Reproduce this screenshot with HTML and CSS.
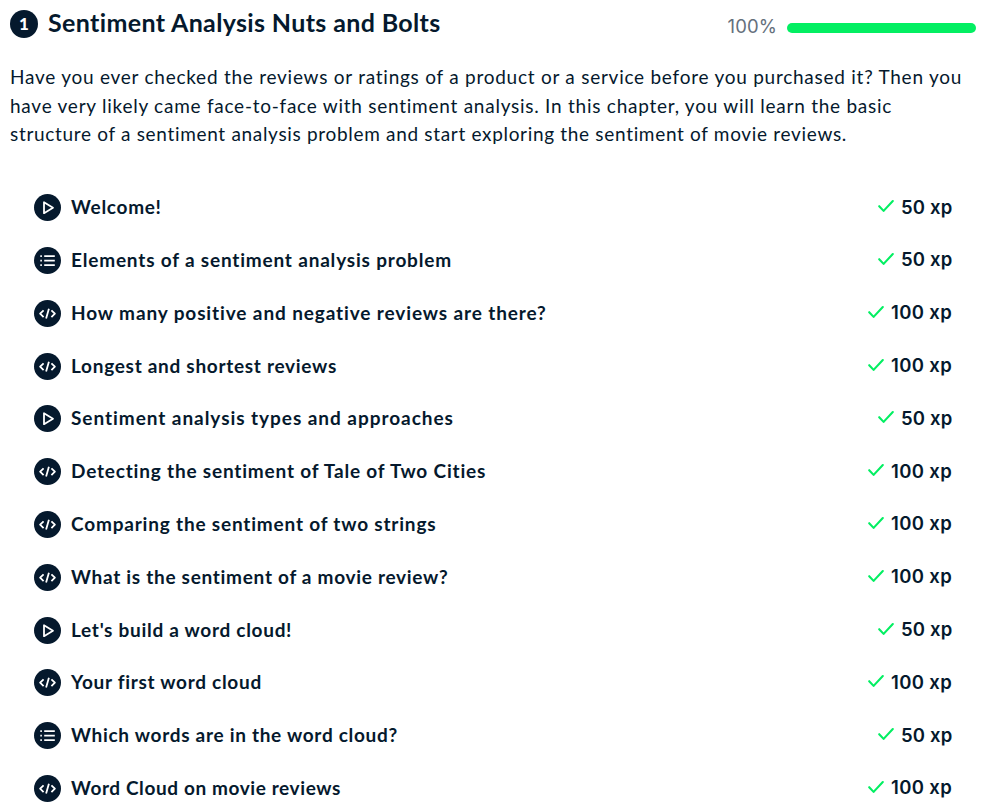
FILE: index.html
```html
<!DOCTYPE html>
<html lang="en">
<head>
<meta charset="utf-8">
<title>Sentiment Analysis Nuts and Bolts</title>
<link rel="stylesheet" href="styles.css">
</head>
<body>
<svg class="sprite" aria-hidden="true">
  <symbol id="play" viewBox="0 0 27 27"><path d="M10 8.2v11l9-5.5z"/></symbol>
  <symbol id="list" viewBox="0 0 27 27"><path d="M10.2 9.2h10.6M10.2 13.7h10.6M10.2 18.2h10.6M6.3 9.2h1.6M6.3 13.7h1.6M6.3 18.2h1.6"/></symbol>
  <symbol id="code" viewBox="0 0 27 27"><path d="M9.6 10.3l-3.5 3.4 3.5 3.4M17.4 10.3l3.5 3.4-3.5 3.4M14.9 8.8l-2.8 9.8"/></symbol>
  <symbol id="check" viewBox="0 0 16 14"><path d="M1.2 7.2l4.4 4.7L14.8 2"/></symbol>
</svg>
<main class="chapter">
  <header class="header">
    <span class="number">1</span>
    <h1 class="title">Sentiment Analysis Nuts and Bolts</h1>
    <span class="percent">100%</span>
    <span class="progress"></span>
  </header>
  <p class="description"><span class="line">Have you ever checked the reviews or ratings of a product or a service before you purchased it? Then you</span> <span class="line">have very likely came face-to-face with sentiment analysis. In this chapter, you will learn the basic</span> <span class="line">structure of a sentiment analysis problem and start exploring the sentiment of movie reviews.</span></p>
  <ul class="exercises">
    <li class="row"><svg class="icon"><use href="#play"/></svg><span class="name">Welcome!</span><svg class="check"><use href="#check"/></svg><span class="xp">50 xp</span></li>
    <li class="row"><svg class="icon"><use href="#list"/></svg><span class="name loose">Elements of a sentiment analysis problem</span><svg class="check"><use href="#check"/></svg><span class="xp">50 xp</span></li>
    <li class="row"><svg class="icon"><use href="#code"/></svg><span class="name looser">How many positive and negative reviews are there?</span><svg class="check"><use href="#check"/></svg><span class="xp wide">100 xp</span></li>
    <li class="row"><svg class="icon"><use href="#code"/></svg><span class="name">Longest and shortest reviews</span><svg class="check"><use href="#check"/></svg><span class="xp wide">100 xp</span></li>
    <li class="row"><svg class="icon"><use href="#play"/></svg><span class="name loosest">Sentiment analysis types and approaches</span><svg class="check"><use href="#check"/></svg><span class="xp">50 xp</span></li>
    <li class="row"><svg class="icon"><use href="#code"/></svg><span class="name loose">Detecting the sentiment of Tale of Two Cities</span><svg class="check"><use href="#check"/></svg><span class="xp wide">100 xp</span></li>
    <li class="row"><svg class="icon"><use href="#code"/></svg><span class="name loose">Comparing the sentiment of two strings</span><svg class="check"><use href="#check"/></svg><span class="xp wide">100 xp</span></li>
    <li class="row"><svg class="icon"><use href="#code"/></svg><span class="name">What is the sentiment of a movie review?</span><svg class="check"><use href="#check"/></svg><span class="xp wide">100 xp</span></li>
    <li class="row"><svg class="icon"><use href="#play"/></svg><span class="name">Let's build a word cloud!</span><svg class="check"><use href="#check"/></svg><span class="xp">50 xp</span></li>
    <li class="row"><svg class="icon"><use href="#code"/></svg><span class="name">Your first word cloud</span><svg class="check"><use href="#check"/></svg><span class="xp wide">100 xp</span></li>
    <li class="row"><svg class="icon"><use href="#list"/></svg><span class="name">Which words are in the word cloud?</span><svg class="check"><use href="#check"/></svg><span class="xp">50 xp</span></li>
    <li class="row"><svg class="icon"><use href="#code"/></svg><span class="name tight">Word Cloud on movie reviews</span><svg class="check"><use href="#check"/></svg><span class="xp wide">100 xp</span></li>
  </ul>
</main>
</body>
</html>
```
FILE: styles.css
```css
* { box-sizing: border-box; }
body {
  margin: 0;
  height: 807px;
  overflow: hidden;
  background: #fff;
  color: #05192d;
  font-family: Lato, "Liberation Sans", sans-serif;
}
.sprite { display: none; }
.chapter { padding: 0 23px 0 10px; }
.header { display: flex; align-items: center; height: 48px; }
.number {
  width: 28px;
  height: 28px;
  border-radius: 50%;
  background: #05192d;
  color: #fff;
  font-size: 17px;
  font-weight: 900;
  line-height: 28px;
  text-align: center;
}
.title {
  flex: 1;
  margin: 0 0 4px 10px;
  font-size: 25px;
  line-height: 30px;
  letter-spacing: 0.36px;
  white-space: nowrap;
}
.percent {
  margin-top: 4px;
  margin-right: 10px;
  color: #65707c;
  font-family: Inter, sans-serif;
  font-size: 18.5px;
  letter-spacing: 0.1px;
}
.progress {
  width: 189px;
  height: 10px;
  margin-top: 8px;
  border-radius: 5px;
  background: #03ef62;
}
.description { margin: 15px 0 0; font-size: 19px; line-height: 28.6px; letter-spacing: 0.75px; }
.line { display: block; white-space: nowrap; }
.line:last-child { letter-spacing: 0.68px; }
.exercises { margin: 32.5px 0 0; padding: 0 24px; list-style: none; }
.row { display: flex; align-items: center; height: 52.8px; font-size: 19px; font-weight: 700; }
.icon {
  width: 27px;
  height: 27px;
  border-radius: 50%;
  background: #05192d;
  fill: none;
  stroke: #fff;
  stroke-width: 1.8;
  stroke-linejoin: round;
}
.name { flex: 1; margin: 0 0 2px 10px; letter-spacing: 0.71px; white-space: nowrap; }
.tight { letter-spacing: 0.6px; }
.loose { letter-spacing: 0.81px; }
.looser { letter-spacing: 0.88px; }
.loosest { letter-spacing: 0.95px; }
.check {
  width: 16px;
  height: 14px;
  margin: 0 7px 3px 0;
  fill: none;
  stroke: #03ef62;
  stroke-width: 2.1;
  stroke-linecap: round;
  stroke-linejoin: round;
}
.xp { width: 51px; margin-bottom: 2px; font-family: Inter, sans-serif; font-size: 18.5px; font-weight: 600; letter-spacing: 0.2px; white-space: nowrap; }
.wide { width: 61px; letter-spacing: 0.35px; }
```
